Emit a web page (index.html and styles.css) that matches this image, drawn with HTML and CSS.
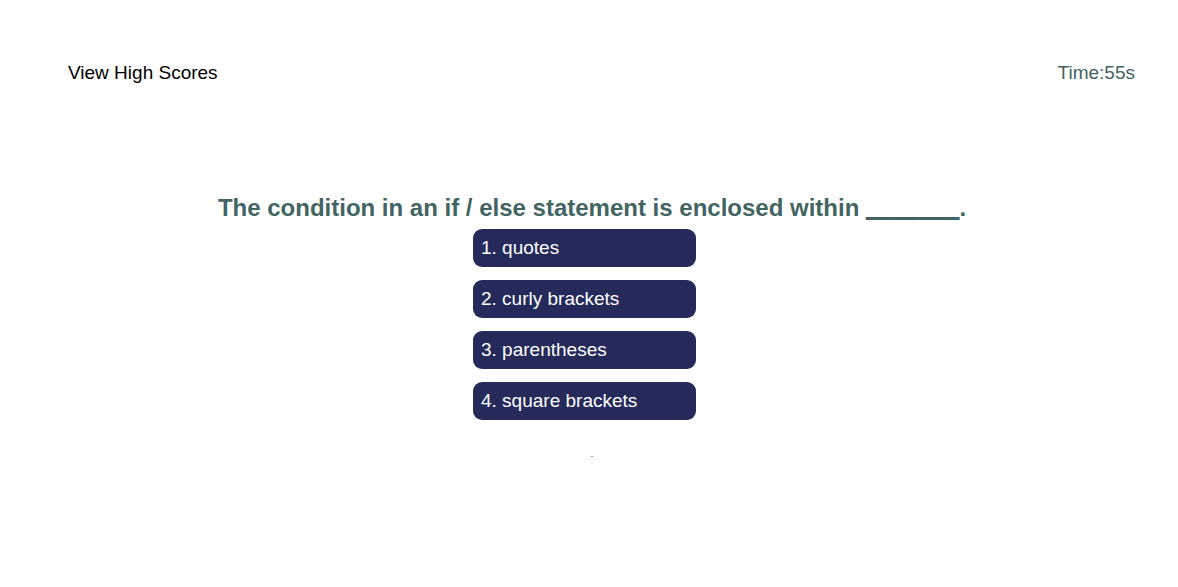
FILE: index.html
```html
<!DOCTYPE html>
<html lang="en">
<head>
<meta charset="utf-8">
<meta name="viewport" content="width=device-width, initial-scale=1">
<title>Code Quiz</title>
<link rel="stylesheet" href="styles.css">
</head>
<body>
<header class="topbar">
<a class="scores-link" href="#scores">View High Scores</a>
<p class="timer">Time:55s</p>
</header>
<main class="quiz">
<h1 class="question">The condition in an if / else statement is enclosed within <span class="blank">_______</span>.</h1>
<div class="choices">
<button class="choice" type="button">1. quotes</button>
<button class="choice" type="button">2. curly brackets</button>
<button class="choice" type="button">3. parentheses</button>
<button class="choice" type="button">4. square brackets</button>
</div>
<hr class="divider">
</main>
</body>
</html>
```
FILE: styles.css
```css
body {
  margin: 0;
  background: #fff;
  color: #426462;
  font-family: "Liberation Sans", Arial, sans-serif;
  font-size: 19px;
  line-height: 22px;
}

.topbar {
  display: flex;
  justify-content: space-between;
  padding: 62px 43px 0 68px;
}

.scores-link {
  color: #000;
  text-decoration: none;
}

.timer {
  margin: 0;
}

.quiz {
  display: flex;
  flex-direction: column;
  align-items: center;
  padding-top: 110px;
  padding-left: 6px;
}

.question {
  margin: 0;
  font-size: 24px;
  line-height: 28px;
  text-align: center;
}

.blank {
  text-shadow: 0 1px 0 currentColor, 0 -1px 0 currentColor;
}

.choices {
  display: grid;
  gap: 13px;
  width: 223px;
  margin: 7px 15px 0 0;
}

.choice {
  padding: 8px;
  border: 0;
  border-radius: 9px;
  background: #252a5a;
  color: #fff;
  font: inherit;
  text-align: left;
  cursor: pointer;
}

.divider {
  width: 2px;
  height: 1px;
  margin: 36px 0 0;
  border: 0;
  background: #999;
}
```
